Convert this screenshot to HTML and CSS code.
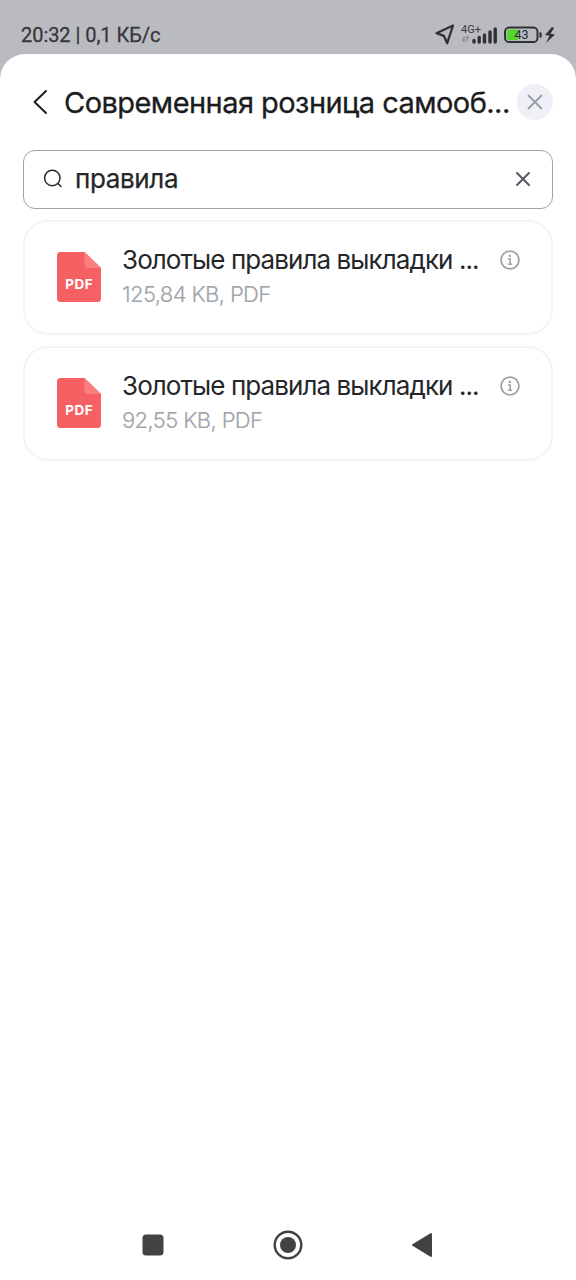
FILE: index.html
```html
<!DOCTYPE html>
<html lang="ru">
<head>
<meta charset="utf-8">
<title>Современная розница</title>
<link rel="stylesheet" href="styles.css">
</head>
<body>
<div class="status">
  <span class="status-text">20:32 | 0,1 КБ/с</span>
  <svg class="status-icons" width="122" height="26" viewBox="0 0 122 26">
    <path d="M19 4.500 2.500 12.200 9.800 14.800 13.200 22.200Z" fill="none" stroke="#303136" stroke-width="2.300" stroke-linejoin="round"/>
    <text x="27" y="11.500" class="network">4G+</text>
    <path d="M30 15v6M28 18l2 2.500M33 21v-6M35 17.500l-2-2.500" stroke="#85868b" stroke-width="1.200" fill="none"/>
    <path d="M40 19.500v1.500M45.200 16.500v4.500M50.500 14v7M56 11v10M61.200 8v13" stroke="#303136" stroke-width="3.400" stroke-linecap="round"/>
    <rect x="71" y="6.600" width="32.500" height="14.500" rx="4.200" fill="none" stroke="#303136" stroke-width="2"/>
    <path d="M75 8.500h9v10.700h-9a2.200 2.200 0 0 1-2.200-2.200v-6.300a2.200 2.200 0 0 1 2.200-2.200Z" fill="#58d52c"/>
    <text x="80.500" y="18.400" class="charge">43</text>
    <path d="M106.500 12.300v3.400" stroke="#303136" stroke-width="2.200" stroke-linecap="round"/>
    <path d="M118 6 111 14l4.500.8-3.500 7.200 9-8.500-4.500-.8 3.500-5.700Z" fill="#303136"/>
  </svg>
</div>
<main class="sheet">
  <header class="header">
    <svg class="back" width="16" height="26" viewBox="0 0 16 26"><path d="M14 2 2.500 13 14 24" fill="none" stroke="#1c1d21" stroke-width="2" stroke-linecap="round" stroke-linejoin="round"/></svg>
    <h1 class="title">Современная розница самооб...</h1>
    <button class="close" aria-label="Закрыть"><svg width="16" height="16" viewBox="0 0 16 16"><path d="m1.500 1.500 13 13m0-13-13 13" stroke="#989ca7" stroke-width="1.800" stroke-linecap="round"/></svg></button>
  </header>
  <div class="search">
    <svg class="search-icon" width="20" height="20" viewBox="0 0 20 20"><circle cx="9.300" cy="9" r="7.700" fill="none" stroke="#292a2e" stroke-width="1.500"/><path d="m15 14.500 3 3" stroke="#292a2e" stroke-width="1.500" stroke-linecap="round"/></svg>
    <span class="query">правила</span>
    <svg class="clear" width="16" height="16" viewBox="0 0 16 16"><path d="m2 2 12 12m0-12L2 14" stroke="#55585f" stroke-width="2" stroke-linecap="round"/></svg>
  </div>
  <section class="files">
    <article class="card">
      <svg class="pdf" width="46" height="52" viewBox="0 0 46 52"><path d="M5 1h23.500L45 17v30.500a3.500 3.500 0 0 1-3.500 3.500H4.500A3.500 3.500 0 0 1 1 47.500V4.500A3.500 3.500 0 0 1 4.500 1Z" fill="#f66062"/><path d="M28.500 1 45 17H31.500a3 3 0 0 1-3-3Z" fill="#fa7e7f"/><text x="23.300" y="38" class="pdf-label">PDF</text></svg>
      <div class="info"><div class="name">Золотые правила выкладки ...</div><div class="meta">125,84 KB, PDF</div></div>
      <svg class="details" width="20" height="20" viewBox="0 0 20 20"><circle cx="10" cy="10" r="8.900" fill="none" stroke="#9fa2aa" stroke-width="1.800"/><circle cx="9.800" cy="5.900" r="1.200" fill="#9fa2aa"/><path d="M8 9h2.200v5.200M8 14.300h4.200" fill="none" stroke="#9fa2aa" stroke-width="1.600"/></svg>
    </article>
    <article class="card">
      <svg class="pdf" width="46" height="52" viewBox="0 0 46 52"><path d="M5 1h23.500L45 17v30.500a3.500 3.500 0 0 1-3.500 3.500H4.500A3.500 3.500 0 0 1 1 47.500V4.500A3.500 3.500 0 0 1 4.500 1Z" fill="#f66062"/><path d="M28.500 1 45 17H31.500a3 3 0 0 1-3-3Z" fill="#fa7e7f"/><text x="23.300" y="38" class="pdf-label">PDF</text></svg>
      <div class="info"><div class="name">Золотые правила выкладки ...</div><div class="meta">92,55 KB, PDF</div></div>
      <svg class="details" width="20" height="20" viewBox="0 0 20 20"><circle cx="10" cy="10" r="8.900" fill="none" stroke="#9fa2aa" stroke-width="1.800"/><circle cx="9.800" cy="5.900" r="1.200" fill="#9fa2aa"/><path d="M8 9h2.200v5.200M8 14.300h4.200" fill="none" stroke="#9fa2aa" stroke-width="1.600"/></svg>
    </article>
  </section>
  <nav class="nav">
    <svg width="22" height="22" viewBox="0 0 22 22"><rect x=".5" y=".5" width="21" height="21" rx="3.500" fill="#424242"/></svg>
    <svg width="30" height="30" viewBox="0 0 30 30"><circle cx="15" cy="15" r="13.300" fill="none" stroke="#424242" stroke-width="2.400"/><circle cx="15" cy="15" r="8" fill="#424242"/></svg>
    <svg width="22" height="26" viewBox="0 0 22 26"><path d="M2 13 20 2v22Z" fill="#424242" stroke="#424242" stroke-width="2" stroke-linejoin="round"/></svg>
  </nav>
</main>
</body>
</html>
```
FILE: styles.css
```css
* { box-sizing: border-box; }
body {
  margin: 0;
  height: 1280px;
  display: flex;
  flex-direction: column;
  background: #babbc1;
  font-family: Inter, sans-serif;
  overflow: hidden;
}
svg { display: block; flex: none; }
.status {
  height: 54px;
  padding: 21px 20px 0 21px;
  display: flex;
  justify-content: space-between;
  align-items: flex-start;
}
.status-text {
  font: 400 20px/28px Roboto, sans-serif;
  letter-spacing: -.05px;
  -webkit-text-stroke: .3px #36373c;
  color: #36373c;
  white-space: nowrap;
}
.network { font: 400 11px Roboto, sans-serif; fill: #3b3c41; }
.charge { font: 400 12.500px Roboto, sans-serif; fill: #25272a; }
.sheet {
  flex: 1;
  display: flex;
  flex-direction: column;
  padding: 0 23px;
  background: #fff;
  border-radius: 25px 25px 0 0;
}
.header {
  height: 96px;
  padding-left: 9px;
  display: flex;
  align-items: center;
}
.title {
  flex: 1;
  margin: 0 0 0 16px;
  padding-top: 2px;
  font-size: 29px;
  font-weight: 400;
  line-height: 40px;
  letter-spacing: -.55px;
  -webkit-text-stroke: .3px #1b1c20;
  white-space: nowrap;
  color: #1b1c20;
}
.close {
  width: 36px;
  height: 36px;
  flex: none;
  padding: 0;
  border: 0;
  border-radius: 50%;
  background: #eff0f6;
  display: flex;
  align-items: center;
  justify-content: center;
}
.search {
  height: 59px;
  padding: 0 21px 2px 19px;
  border: 1.500px solid #a1a2a4;
  border-radius: 12px;
  display: flex;
  align-items: center;
}
.query {
  flex: 1;
  margin-left: 12px;
  font-size: 26px;
  font-weight: 400;
  line-height: 36px;
  letter-spacing: -.35px;
  -webkit-text-stroke: .25px #25262a;
  color: #25262a;
}
.files {
  margin-top: 11px;
  display: flex;
  flex-direction: column;
  gap: 11px;
}
.card {
  height: 115px;
  padding: 21px 31px 0 31px;
  border: 2px solid #f4f4f5;
  border-radius: 25px;
  display: flex;
  align-items: flex-start;
}
.pdf { margin-top: 8px; }
.pdf-label {
  font: 700 13.500px Inter, sans-serif;
  letter-spacing: .6px;
  fill: #fff;
  text-anchor: middle;
}
.info { flex: 1; margin-left: 20px; }
.name {
  font-size: 26px;
  line-height: 34px;
  letter-spacing: -.92px;
  white-space: nowrap;
  color: #25262a;
}
.meta {
  font-size: 22px;
  font-weight: 300;
  line-height: 34px;
  letter-spacing: -.62px;
  -webkit-text-stroke: .2px #a0a4ac;
  color: #a0a4ac;
}
.details { margin-top: 7px; }
.nav {
  margin-top: auto;
  height: 70px;
  padding: 0 120px 0 119px;
  display: flex;
  align-items: center;
  justify-content: space-between;
}
```
